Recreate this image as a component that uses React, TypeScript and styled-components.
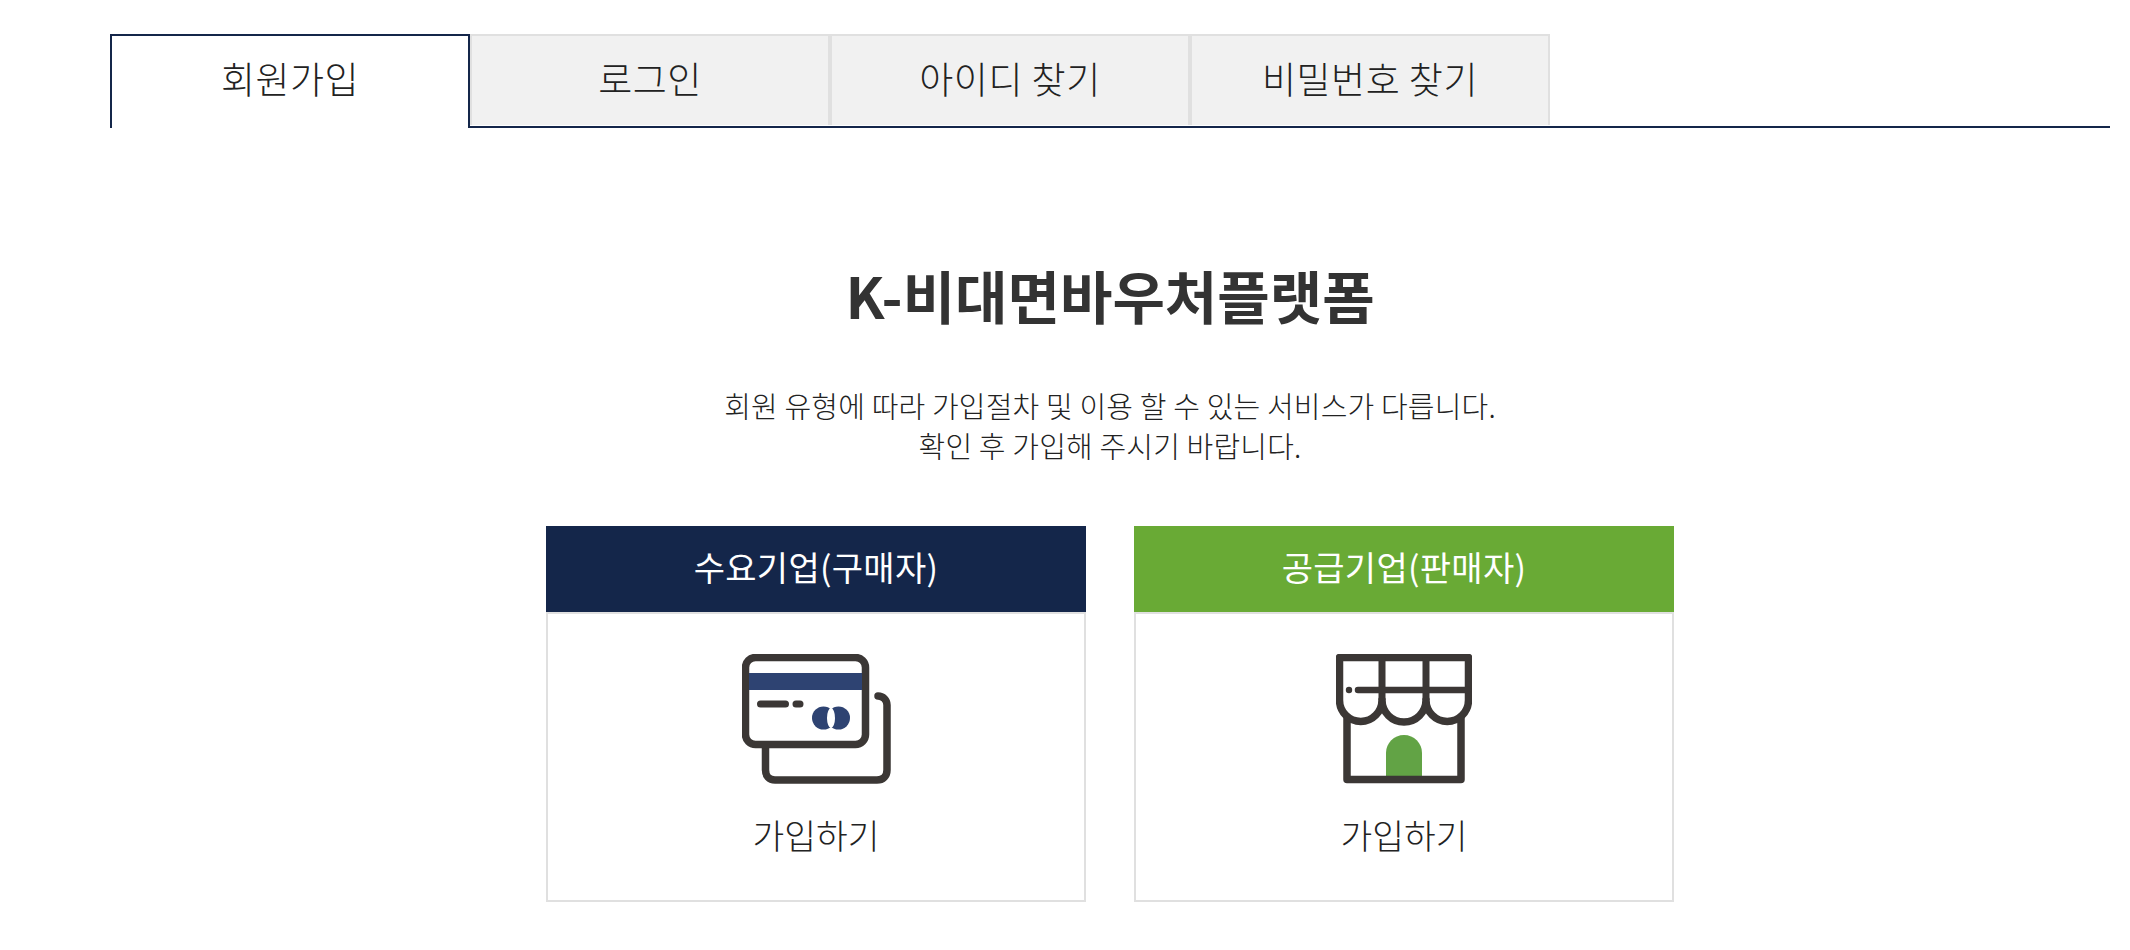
import { FC } from "react"
import styled, { createGlobalStyle } from "styled-components"

const GlobalStyle = createGlobalStyle`
  * {
    box-sizing: border-box;
  }
  html, body {
    margin: 0;
    padding: 0;
    background: #fff;
  }
  body {
    font-family: "Noto Sans CJK KR", "Noto Sans", sans-serif;
    color: #333;
  }
`

const TABS = ["회원가입", "로그인", "아이디 찾기", "비밀번호 찾기"]

const CardIcon: FC = () => (
  <svg width="149" height="130" viewBox="0 0 149 130" fill="none">
    <path
      d="M136 42H136C141 42 145 46 145 51V116C145 122 141 126 135 126H33C27 126 23.500 122 23.500 116V90"
      stroke="#3b3735"
      strokeWidth="7.500"
      strokeLinecap="round"
    />
    <rect x="3.5" y="3.5" width="120" height="87" rx="10" fill="#fff" stroke="#3b3735" strokeWidth="7.500" />
    <rect x="7" y="19" width="113" height="17" fill="#2e4372" />
    <path d="M18.500 50H43.500M54 50H58" stroke="#3b3735" strokeWidth="7" strokeLinecap="round" />
    <circle cx="81.500" cy="64" r="11.500" fill="#2e4372" />
    <circle cx="96.500" cy="64" r="11.500" fill="#2e4372" />
    <ellipse cx="89" cy="64" rx="4" ry="10" fill="#fff" />
  </svg>
)

const StoreIcon: FC = () => (
  <svg width="136" height="130" viewBox="0 0 136 130" fill="none">
    <path d="M50 122V99C50 89 58 81 68 81C78 81 86 89 86 99V122Z" fill="#62a345" />
    <path d="M11 62V125.500H125V62" stroke="#3b3735" strokeWidth="7.500" strokeLinejoin="round" />
    <path
      d="M3.500 3.500H132.500V46A21.250 21.500 0 0 1 90 46A22 22 0 0 1 46 46A21.250 21.500 0 0 1 3.500 46Z"
      fill="#fff"
      stroke="#3b3735"
      strokeWidth="7.500"
      strokeLinejoin="round"
    />
    <path d="M46 3.500V46M90 3.500V46" stroke="#3b3735" strokeWidth="7" />
    <path d="M22 36H132" stroke="#3b3735" strokeWidth="6.500" strokeLinecap="round" />
    <circle cx="13" cy="36" r="3.200" fill="#3b3735" />
  </svg>
)

const App: FC = () => (
  <>
    <GlobalStyle />
    <Page>
      <TabBar>
        {TABS.map((label, i) => (
          <Tab key={label} $active={i === 0}>
            {label}
          </Tab>
        ))}
      </TabBar>
      <Title>K-비대면바우처플랫폼</Title>
      <Intro>
        회원 유형에 따라 가입절차 및 이용 할 수 있는 서비스가 다릅니다.
        <br />
        확인 후 가입해 주시기 바랍니다.
      </Intro>
      <Cards>
        <Card>
          <CardHeader $color="#14264a">수요기업(구매자)</CardHeader>
          <CardBody>
            <CardIcon />
            <JoinLabel>가입하기</JoinLabel>
          </CardBody>
        </Card>
        <Card>
          <CardHeader $color="#69aa35">공급기업(판매자)</CardHeader>
          <CardBody>
            <StoreIcon />
            <JoinLabel>가입하기</JoinLabel>
          </CardBody>
        </Card>
      </Cards>
    </Page>
  </>
)

export default App

const Page = styled.div`
  width: 2000px;
  margin-left: 110px;
  padding-top: 34px;
`

const TabBar = styled.div`
  display: flex;
  height: 94px;
  border-bottom: 2px solid #14264a;
`

const Tab = styled.div<{ $active: boolean }>`
  width: 360px;
  height: ${(p) => (p.$active ? "94px" : "91px")};
  display: flex;
  align-items: center;
  justify-content: center;
  padding-bottom: ${(p) => (p.$active ? "9px" : "6px")};
  font-size: 37px;
  font-weight: 300;
  letter-spacing: 0.5px;
  color: #222;
  background: ${(p) => (p.$active ? "#fff" : "#f1f1f1")};
  border: 2px solid ${(p) => (p.$active ? "#14264a" : "#e0e0e0")};
  border-bottom: none;
`

const Title = styled.h1`
  margin: 130px 0 0;
  font-size: 57px;
  line-height: 72px;
  font-weight: 700;
  text-align: center;
  color: #333;
`

const Intro = styled.p`
  margin: 55px 0 0;
  font-size: 29px;
  font-weight: 300;
  letter-spacing: 0.18px;
  line-height: 40px;
  text-align: center;
  color: #222;
`

const Cards = styled.div`
  display: flex;
  justify-content: center;
  gap: 48px;
  margin-top: 61px;
`

const Card = styled.div`
  width: 540px;
`

const CardHeader = styled.div<{ $color: string }>`
  height: 86px;
  padding-bottom: 6px;
  display: flex;
  align-items: center;
  justify-content: center;
  font-size: 34px;
  font-weight: 400;
  letter-spacing: 0.3px;
  color: #fff;
  background: ${(p) => p.$color};
`

const CardBody = styled.div`
  height: 290px;
  padding-top: 40px;
  display: flex;
  flex-direction: column;
  align-items: center;
  border: 2px solid #e0e0e0;
`

const JoinLabel = styled.div`
  margin-top: 25px;
  font-size: 34.500px;
  font-weight: 300;
  line-height: 50px;
  color: #222;
`
